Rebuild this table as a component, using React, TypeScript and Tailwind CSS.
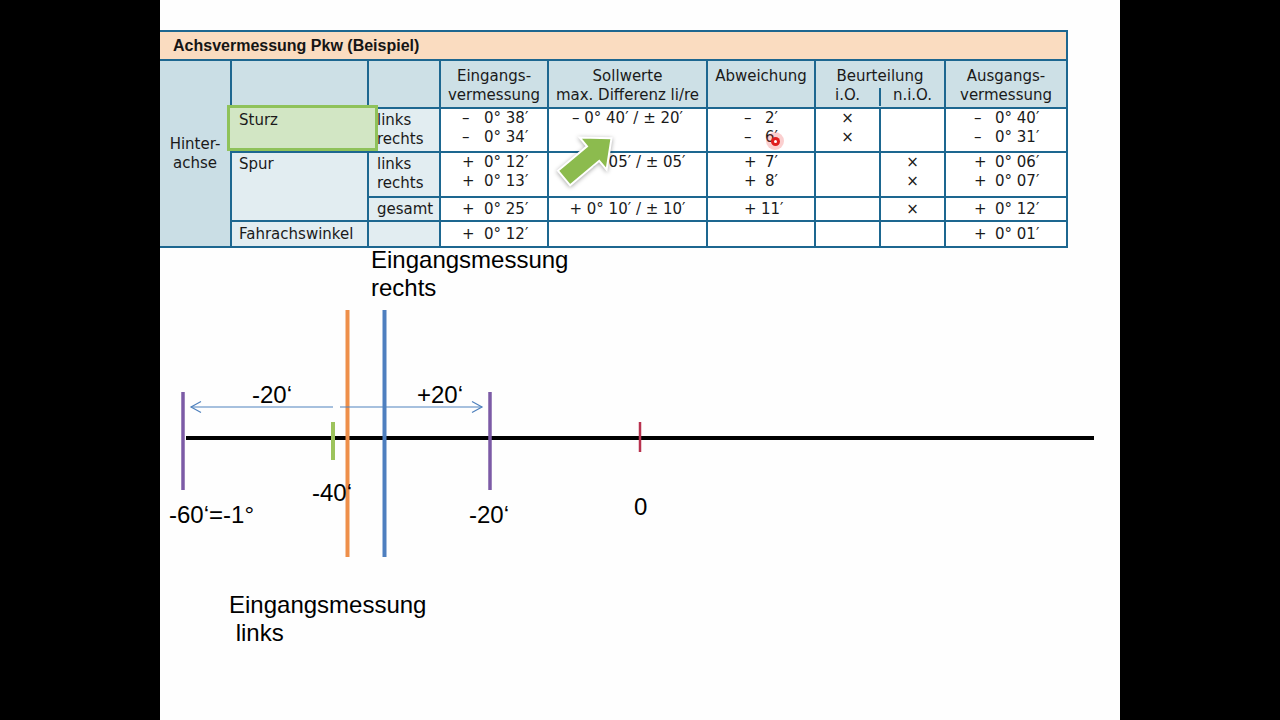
import React from 'react';

const line = 'border-2 border-[#1d6790]';

function Val({ sign, value, pad, w }: { sign: string; value: string; pad: string; w: string }) {
  return (
    <div className={`whitespace-nowrap ${pad}`}>
      <span className={`inline-block ${w}`}>{sign}</span>
      {value}
    </div>
  );
}

function Eing({ rows }: { rows: [string, string][] }) {
  return (
    <td className={`${line} bg-white`}>
      {rows.map(([s, v], i) => (
        <Val key={i} sign={s} value={v} pad="pl-[21px]" w="w-[22px]" />
      ))}
    </td>
  );
}

function Ausg({ rows }: { rows: [string, string][] }) {
  return (
    <td className={`${line} bg-white`}>
      {rows.map(([s, v], i) => (
        <Val key={i} sign={s} value={v} pad="pl-[28px]" w="w-[21px]" />
      ))}
    </td>
  );
}

function Abw({ rows }: { rows: [string, string][] }) {
  return (
    <td className={`${line} bg-white`}>
      {rows.map(([s, v], i) => (
        <Val key={i} sign={s} value={v} pad="pl-[36px]" w={v.length > 2 ? 'w-[17px]' : 'w-[21px]'} />
      ))}
    </td>
  );
}

function Marks({ rows }: { rows: string[] }) {
  return (
    <td className={`${line} bg-white text-center`}>
      {rows.map((r, i) => (
        <div key={i}>{r || '\u00a0'}</div>
      ))}
    </td>
  );
}

function Table() {
  return (
    <div className="relative w-[907px]">
      <table className="w-[907px] table-fixed border-collapse font-['DejaVu_Sans',sans-serif] text-[15px] leading-[19px] text-[#1a1a1a]">
        <colgroup>
          <col className="w-[71px]" />
          <col className="w-[137px]" />
          <col className="w-[72px]" />
          <col className="w-[108px]" />
          <col className="w-[159px]" />
          <col className="w-[108px]" />
          <col className="w-[65px]" />
          <col className="w-[65px]" />
          <col className="w-[122px]" />
        </colgroup>
        <tbody>
          <tr className="h-[29px]">
            <td
              colSpan={9}
              className="border-2 border-l-0 border-[#1d6790] bg-[#fadcc0] pl-[13px] font-['Liberation_Sans',Arial,sans-serif] text-[16px] font-bold text-[#151515]"
            >
              Achsvermessung Pkw (Beispiel)
            </td>
          </tr>
          <tr className="h-[48px] bg-[#cde0e6] text-center align-top">
            <td rowSpan={5} className="border-2 border-l-0 border-[#1d6790] bg-[#cadee5] text-center align-middle">
              Hinter-
              <br />
              achse
            </td>
            <td className={line} />
            <td className={line} />
            <td className={`${line} pt-[6px]`}>
              Eingangs-
              <br />
              vermessung
            </td>
            <td className={`${line} pt-[6px]`}>
              Sollwerte
              <br />
              max. Differenz li/re
            </td>
            <td className={`${line} pt-[6px]`}>Abweichung</td>
            <td colSpan={2} className={`${line} p-0 pt-[6px]`}>
              <div>Beurteilung</div>
              <div className="mt-[2px] flex h-[18px] leading-[14px]">
                <div className="flex-1">i.O.</div>
                <div className="flex-1 border-l-2 border-[#1d6790]">n.i.O.</div>
              </div>
            </td>
            <td className={`${line} pt-[6px]`}>
              Ausgangs-
              <br />
              vermessung
            </td>
          </tr>
          <tr className="h-[44px] align-top">
            <td className={`${line} bg-[#e2edf1] pl-[7px] pt-[2px]`}>
              <span className="relative z-[2]">Sturz</span>
            </td>
            <td className={`${line} bg-[#e2edf1] pl-[8px] pt-[2px]`}>
              <div className="relative z-[2]">links</div>
              <div>rechts</div>
            </td>
            <Eing rows={[['–', '0° 38′'], ['–', '0° 34′']]} />
            <td className={`${line} bg-white text-center`}>– 0° 40′ / ± 20′</td>
            <Abw rows={[['–', '2′'], ['–', '6′']]} />
            <Marks rows={['×', '×']} />
            <Marks rows={['', '']} />
            <Ausg rows={[['–', '0° 40′'], ['–', '0° 31′']]} />
          </tr>
          <tr className="h-[45px] align-top">
            <td rowSpan={2} className={`${line} bg-[#e2edf1] pl-[7px] pt-[2px]`}>
              Spur
            </td>
            <td className={`${line} bg-[#e2edf1] pl-[8px] pt-[2px]`}>
              <div>links</div>
              <div>rechts</div>
            </td>
            <Eing rows={[['+', '0° 12′'], ['+', '0° 13′']]} />
            <td className={`${line} bg-white text-center`}>+ 0° 05′ / ± 05′</td>
            <Abw rows={[['+', '7′'], ['+', '8′']]} />
            <Marks rows={['', '']} />
            <Marks rows={['×', '×']} />
            <Ausg rows={[['+', '0° 06′'], ['+', '0° 07′']]} />
          </tr>
          <tr className="h-[24px] align-middle">
            <td className={`${line} bg-[#e2edf1] pl-[8px]`}>gesamt</td>
            <Eing rows={[['+', '0° 25′']]} />
            <td className={`${line} bg-white text-center`}>+ 0° 10′ / ± 10′</td>
            <Abw rows={[['+', '11′']]} />
            <Marks rows={['']} />
            <Marks rows={['×']} />
            <Ausg rows={[['+', '0° 12′']]} />
          </tr>
          <tr className="h-[26px] align-middle">
            <td className={`${line} bg-[#e2edf1] pl-[7px]`}>Fahrachswinkel</td>
            <td className={`${line} bg-[#e2edf1]`} />
            <Eing rows={[['+', '0° 12′']]} />
            <td className={`${line} bg-white`} />
            <td className={`${line} bg-white`} />
            <td className={`${line} bg-white`} />
            <td className={`${line} bg-white`} />
            <Ausg rows={[['+', '0° 01′']]} />
          </tr>
        </tbody>
      </table>

      {/* green highlight on Sturz */}
      <div className="absolute left-[67px] top-[75px] z-[1] h-[46px] w-[151px] bg-[#d2e6c4]" />
      <div className="absolute left-[67px] top-[75px] z-[3] h-[46px] w-[151px] border-[3px] border-[#8fc25a]" />

      {/* pointer arrow */}
      <svg
        className="pointer-events-none absolute left-0 top-0 z-[4] drop-shadow-[0_1px_2px_rgba(0,0,0,0.35)]"
        width="907"
        height="216"
      >
        <polygon
          points="0,-9.5 38,-9.5 38,-21 62,0 38,21 38,9.5 0,9.5"
          transform="translate(404 148) rotate(-40)"
          fill="#8cbb4e"
          stroke="#ffffff"
          strokeWidth="2"
          strokeLinejoin="miter"
        />
      </svg>

      {/* cursor dot */}
      <div className="absolute left-[606px] top-[102px] z-[4] flex h-[18px] w-[18px] items-center justify-center rounded-full bg-[#f04040]/25">
        <div className="flex h-[9px] w-[9px] items-center justify-center rounded-full bg-[#e01e1e]">
          <div className="h-[3px] w-[3px] rounded-full bg-white" />
        </div>
      </div>
    </div>
  );
}

function Diagram() {
  const label = "absolute whitespace-pre font-['Liberation_Sans',Arial,sans-serif] text-[24px] leading-[28px] text-black";
  return (
    <div className="relative h-[474px] w-[960px]">
      <svg className="absolute left-0 top-0" width="960" height="474">
        <line x1="26" y1="190" x2="934" y2="190" stroke="#000" strokeWidth="4" />
        <line x1="23" y1="144" x2="23" y2="242" stroke="#7c5ba6" strokeWidth="3.5" />
        <line x1="330" y1="144" x2="330" y2="242" stroke="#7c5ba6" strokeWidth="3.5" />
        <line x1="173" y1="174" x2="173" y2="212" stroke="#9dc35c" strokeWidth="4" />
        <line x1="187.5" y1="62" x2="187.5" y2="309" stroke="#ee8f4a" strokeWidth="4" />
        <line x1="224.5" y1="62" x2="224.5" y2="309" stroke="#4e7fbf" strokeWidth="4" />
        <line x1="480" y1="174" x2="480" y2="204" stroke="#b8324f" strokeWidth="2.5" />
        {/* double arrow */}
        <g stroke="#4f81bd" strokeWidth="1.2" fill="none">
          <line x1="173" y1="159" x2="31" y2="159" />
          <polyline points="41,153.5 31,159 41,164.5" />
          <line x1="180" y1="159" x2="322" y2="159" />
          <polyline points="312,153.5 322,159 312,164.5" />
        </g>
      </svg>

      <div className={`${label} left-[211px] top-[-2px]`}>
        Eingangsmessung
        <br />
        rechts
      </div>
      <div className={`${label} left-[92px] top-[133px]`}>-20‘</div>
      <div className={`${label} left-[257px] top-[133px]`}>+20‘</div>
      <div className={`${label} left-[9px] top-[253px]`}>-60‘=-1°</div>
      <div className={`${label} left-[152px] top-[231px]`}>-40‘</div>
      <div className={`${label} left-[309px] top-[253px]`}>-20‘</div>
      <div className={`${label} left-[474px] top-[245px]`}>0</div>
      <div className={`${label} left-[69px] top-[343px]`}>
        Eingangsmessung
        <br />
        {' links'}
      </div>
    </div>
  );
}

export default function App() {
  return (
    <div className="min-h-screen w-full bg-black">
      <div className="mx-auto h-[720px] w-[960px] overflow-hidden bg-[#fefefe] pt-[30px]">
        <Table />
        <Diagram />
      </div>
    </div>
  );
}
